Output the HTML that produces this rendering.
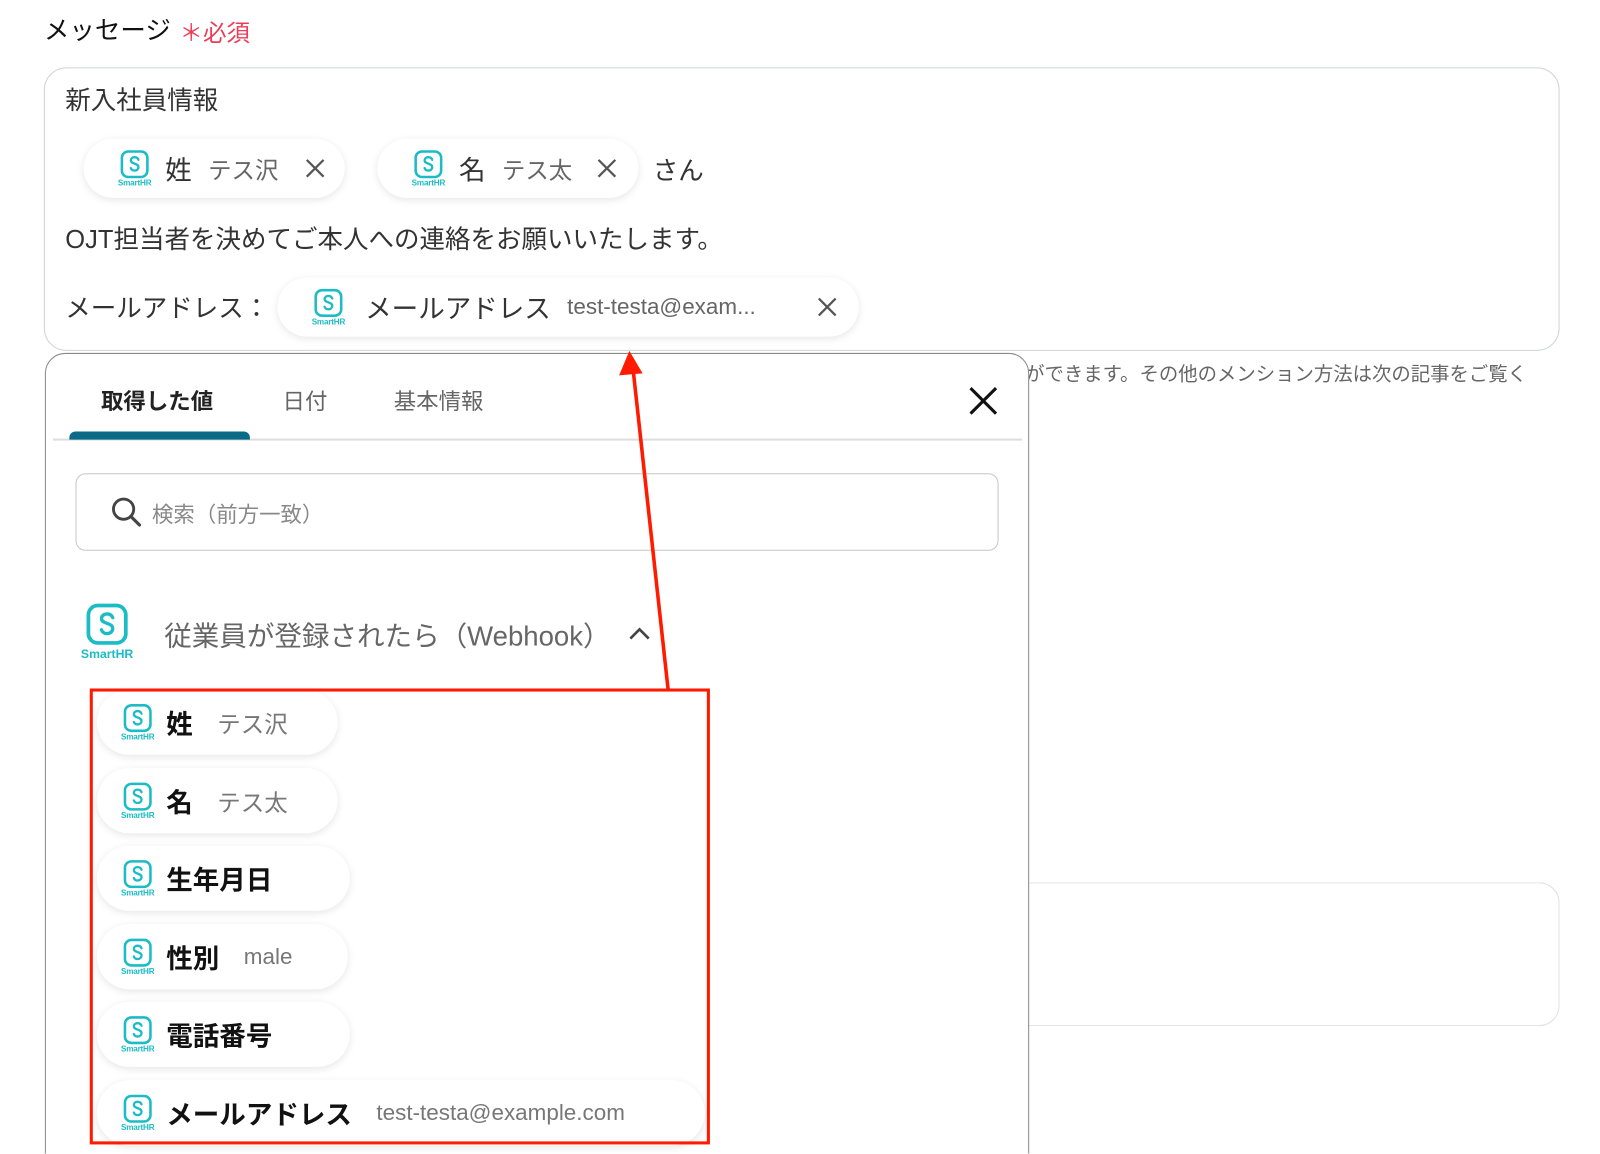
<!DOCTYPE html>
<html style="overflow:hidden;height:1154px"><head><meta charset="utf-8">
<style>
*{margin:0;padding:0;box-sizing:border-box}
body{width:1600px;height:1154px;background:#fff;position:relative;overflow:hidden;font-family:"Liberation Sans","Noto Sans CJK JP",sans-serif;color:#333}
#w{position:absolute;left:0;top:0;width:1568px;height:1131px;overflow:hidden;transform:scale(1.02);transform-origin:0 0}
.a{position:absolute;white-space:nowrap}
.pill{position:absolute;background:#fff;border-radius:32px;box-shadow:0 2px 8px rgba(0,0,0,.10);display:flex;align-items:center}
.ic{display:inline-flex;flex-direction:column;align-items:center;width:40px}
.ic span{font-size:8px;color:#1bbcc6;font-weight:bold;margin-top:-1px;letter-spacing:-.2px}
.x{position:absolute}
</style></head><body>
<svg width="0" height="0" style="position:absolute"><defs>
<symbol id="s" viewBox="0 0 24 24"><rect x="2" y="2" width="20" height="20" rx="5" fill="none" stroke="#1bbcc6" stroke-width="2"/><path d="M15 8.5c-.5-1.3-1.7-2-3-2-1.8 0-3 1.1-3 2.5 0 3 6 2 6 5.3 0 1.5-1.3 2.7-3 2.7-1.4 0-2.6-.8-3-2" fill="none" stroke="#1bbcc6" stroke-width="1.8" stroke-linecap="round"/></symbol>
<symbol id="x" viewBox="0 0 24 24"><path d="M3 3L21 21M21 3L3 21" stroke="#555" stroke-width="2.4" fill="none"/></symbol>
</defs></svg>
<div id="w">
<div class="a" style="left:43px;top:10px;font-size:25px;color:#111">メッセージ</div>
<div class="a" style="left:176px;top:13px;font-size:23px;color:#ee3c57">＊必須</div>

<div class="a" style="left:43px;top:66px;width:1486px;height:278px;border:1.5px solid #cfd3d9;border-radius:22px"></div>
<div class="a" style="left:64px;top:79px;font-size:25px">新入社員情報</div>

<div class="pill" style="left:82px;top:136px;width:256px;height:58px;padding-left:30px">
<div class="ic"><svg width="30" height="30"><use href="#s"/></svg><span>SmartHR</span></div>
<span style="font-size:26px;margin-left:10px;color:#333">姓</span><span style="font-size:23px;margin-left:16px;color:#666">テス沢</span>
<svg class="x" style="left:216px;top:18px" width="22" height="22"><use href="#x"/></svg></div>

<div class="pill" style="left:370px;top:136px;width:256px;height:58px;padding-left:30px">
<div class="ic"><svg width="30" height="30"><use href="#s"/></svg><span>SmartHR</span></div>
<span style="font-size:26px;margin-left:10px;color:#333">名</span><span style="font-size:23px;margin-left:16px;color:#666">テス太</span>
<svg class="x" style="left:214px;top:18px" width="22" height="22"><use href="#x"/></svg></div>
<div class="a" style="left:640px;top:148px;font-size:25px">さん</div>

<div class="a" style="left:64px;top:215px;font-size:25px">OJT担当者を決めてご本人への連絡をお願いいたします。</div>
<div class="a" style="left:64px;top:283px;font-size:25px">メールアドレス：</div>
<div class="pill" style="left:272px;top:272px;width:570px;height:58px;padding-left:30px">
<div class="ic"><svg width="30" height="30"><use href="#s"/></svg><span>SmartHR</span></div>
<span style="font-size:26px;margin-left:16px;color:#333">メールアドレス</span><span style="font-size:22px;margin-left:16px;color:#666">test-testa@exam...</span>
<svg class="x" style="left:528px;top:18px" width="22" height="22"><use href="#x"/></svg></div>

<div class="a" style="left:1005px;top:352px;font-size:19px;color:#666">ができます。その他のメンション方法は次の記事をご覧く</div>
<div class="a" style="left:1008px;top:865px;width:521px;height:141px;border:1.5px solid #dde0e4;border-radius:0 20px 20px 0;border-left:none"></div>

<div class="a" style="left:44px;top:346px;width:965px;height:820px;border:1.5px solid #8a8a8a;border-radius:20px;background:#fff"></div>
<div class="a" style="left:99px;top:376px;font-size:22px;color:#222;font-weight:bold">取得した値</div>
<div class="a" style="left:277px;top:376px;font-size:22px;color:#666">日付</div>
<div class="a" style="left:386px;top:376px;font-size:22px;color:#666">基本情報</div>
<div class="a" style="left:52px;top:430px;width:950px;height:1.5px;background:#ddd"></div>
<div class="a" style="left:68px;top:423px;width:177px;height:8px;background:#0b6a85;border-radius:6px 6px 0 0"></div>
<svg class="a" style="left:949px;top:378px" width="30" height="30" viewBox="0 0 24 24"><path d="M2 2L22 22M22 2L2 22" stroke="#111" stroke-width="2.4"/></svg>

<div class="a" style="left:74px;top:464px;width:905px;height:76px;border:1.5px solid #c6c6c6;border-radius:10px"></div>
<svg class="a" style="left:107px;top:485px" width="34" height="34" viewBox="0 0 24 24"><circle cx="10" cy="10" r="7" fill="none" stroke="#444" stroke-width="2"/><path d="M15 15L21 21" stroke="#444" stroke-width="2.2" stroke-linecap="round"/></svg>
<div class="a" style="left:149px;top:489px;font-size:21px;color:#888">検索（前方一致）</div>

<div class="a" style="left:76px;top:590px;display:flex;flex-direction:column;align-items:center;width:58px"><svg width="44" height="44"><use href="#s"/></svg><span style="font-size:12px;color:#1bbcc6;font-weight:bold">SmartHR</span></div>
<div class="a" style="left:161px;top:602px;font-size:27px;color:#666">従業員が登録されたら（Webhook）</div>
<svg class="a" style="left:615px;top:612px" width="24" height="18" viewBox="0 0 24 18"><path d="M3 14L12 5L21 14" stroke="#444" stroke-width="2.6" fill="none"/></svg>

<div class="pill" style="left:95px;top:676px;width:236px;height:64px;padding-left:20px"><div class="ic"><svg width="30" height="30"><use href="#s"/></svg><span>SmartHR</span></div><span style="font-size:26px;font-weight:bold;color:#111;margin-left:8px">姓</span><span style="font-size:23px;color:#777;margin-left:24px">テス沢</span></div>
<div class="pill" style="left:95px;top:753px;width:236px;height:64px;padding-left:20px"><div class="ic"><svg width="30" height="30"><use href="#s"/></svg><span>SmartHR</span></div><span style="font-size:26px;font-weight:bold;color:#111;margin-left:8px">名</span><span style="font-size:23px;color:#777;margin-left:24px">テス太</span></div>
<div class="pill" style="left:95px;top:829px;width:248px;height:64px;padding-left:20px"><div class="ic"><svg width="30" height="30"><use href="#s"/></svg><span>SmartHR</span></div><span style="font-size:26px;font-weight:bold;color:#111;margin-left:8px">生年月日</span></div>
<div class="pill" style="left:95px;top:906px;width:246px;height:64px;padding-left:20px"><div class="ic"><svg width="30" height="30"><use href="#s"/></svg><span>SmartHR</span></div><span style="font-size:26px;font-weight:bold;color:#111;margin-left:8px">性別</span><span style="font-size:22px;color:#777;margin-left:24px">male</span></div>
<div class="pill" style="left:95px;top:982px;width:248px;height:64px;padding-left:20px"><div class="ic"><svg width="30" height="30"><use href="#s"/></svg><span>SmartHR</span></div><span style="font-size:26px;font-weight:bold;color:#111;margin-left:8px">電話番号</span></div>
<div class="pill" style="left:95px;top:1059px;width:596px;height:64px;padding-left:20px"><div class="ic"><svg width="30" height="30"><use href="#s"/></svg><span>SmartHR</span></div><span style="font-size:26px;font-weight:bold;color:#111;margin-left:8px">メールアドレス</span><span style="font-size:22px;color:#777;margin-left:24px">test-testa@example.com</span></div>

<div class="a" style="left:88px;top:675px;width:608px;height:447px;border:3.5px solid #ff1a00"></div>
<svg class="a" style="left:0;top:0" width="1568" height="1131"><path d="M655 676L621 365" stroke="#ff1a00" stroke-width="3.5"/><path d="M617 344L607 368L630 366Z" fill="#ff1a00"/></svg>
</div>
</body></html>
